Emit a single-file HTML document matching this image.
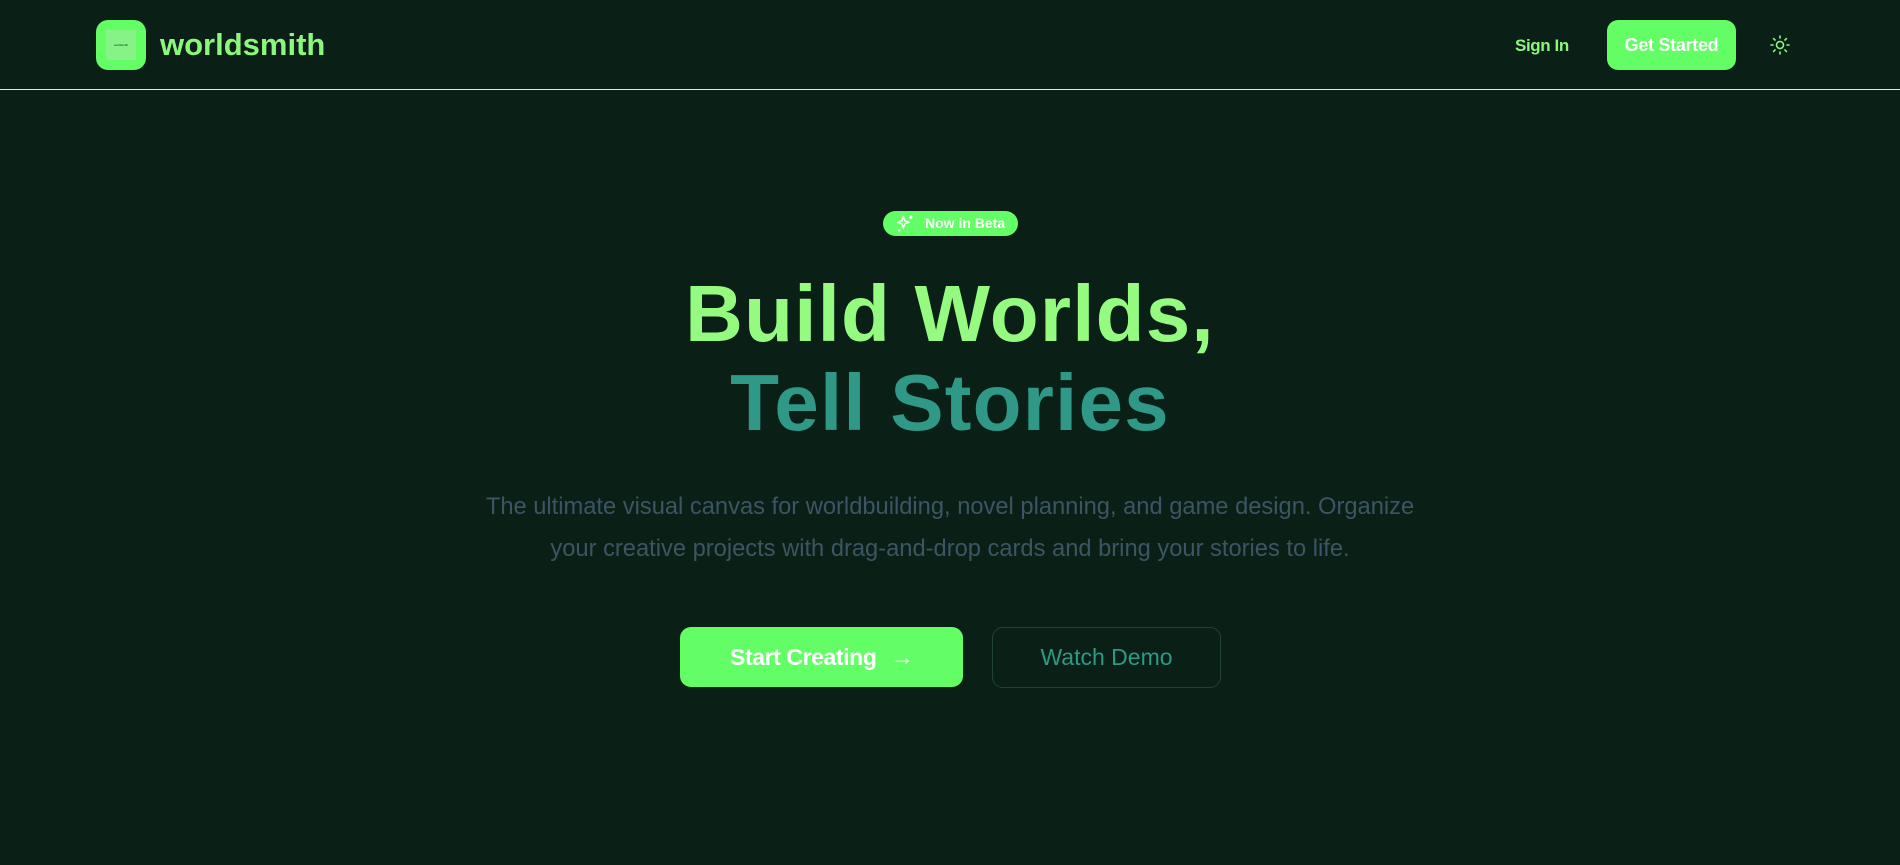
<!DOCTYPE html>
<html><head><meta charset="utf-8"><style>
*{margin:0;padding:0;box-sizing:border-box}
body{width:1900px;height:865px;background:#0a1f15;font-family:"Liberation Sans",sans-serif;overflow:hidden;position:relative}
.hdr{position:absolute;left:0;top:0;width:1900px;height:90px;border-bottom:1.5px solid #dfe8e2}
.logo{position:absolute;left:96px;top:20px;width:50px;height:50px;border-radius:12px;background:#63fd66}
.logo i{position:absolute;left:10px;top:10px;width:30px;height:30px;background:#86f386;font-size:3px;color:#123;font-style:normal;line-height:30px;text-align:center}
.brand{position:absolute;left:160px;top:27px;font-size:31px;font-weight:bold;color:#8cf77d}
.signin{position:absolute;left:1515px;top:36px;font-size:17px;color:#8cf77d;font-weight:bold;letter-spacing:-0.4px}
.gs{position:absolute;left:1607px;top:20px;width:129px;height:50px;border-radius:11px;background:#63fd66;color:#fff;font-size:18px;font-weight:bold;text-align:center;line-height:50px;letter-spacing:-0.3px}
.sun{position:absolute;left:1770px;top:35px}
.badge{position:absolute;left:883px;top:211px;width:135px;height:25px;border-radius:13px;background:#63fd66;color:#fff;font-size:14px;font-weight:bold;line-height:25px;padding-left:42px}
.badge svg{position:absolute;left:12px;top:3px}
h1{position:absolute;left:0;width:1900px;text-align:center;font-size:80px;font-weight:bold;letter-spacing:1.2px;line-height:89px}
.l1{top:269px;color:#94fb80}
.l2{top:358px;color:#2f9886}
p{position:absolute;left:470px;width:960px;top:486px;text-align:center;font-size:23.7px;line-height:42px;color:#3c5564}
.b1{position:absolute;left:680px;top:627px;width:283px;height:60px;border-radius:11px;background:#63fd66;color:#fff;font-size:23px;font-weight:bold;line-height:60px;padding-left:50px;letter-spacing:-0.4px}
.b1 span{position:absolute;left:211px;top:0;font-weight:normal}
.b2{position:absolute;left:992px;top:627px;width:229px;height:61px;border-radius:11px;border:1px solid #1f4434;color:#2f9886;font-size:23px;text-align:center;line-height:59px}
</style></head><body>
<div class="hdr"></div>
<div class="logo"><i>worldsmith</i></div>
<div class="brand">worldsmith</div>
<div class="signin">Sign In</div>
<div class="gs">Get Started</div>
<svg class="sun" width="20" height="20" viewBox="0 0 20 20" stroke="#8cf77d" stroke-width="1.6" fill="none" stroke-linecap="round"><circle cx="10" cy="10" r="3.5"/><path d="M10 1v2M10 17v2M1 10h2M17 10h2M3.6 3.6l1.4 1.4M15 15l1.4 1.4M3.6 16.4L5 15M15 5l1.4-1.4"/></svg>
<div class="badge"><svg width="20" height="20" viewBox="0 0 24 24" fill="none" stroke="#fff" stroke-width="1.8" stroke-linejoin="round"><path d="M10 3l1.8 5.2L17 10l-5.2 1.8L10 17l-1.8-5.2L3 10l5.2-1.8z"/><path d="M19 2v4M17 4h4M5 18v3M3.5 19.5h3"/></svg>Now in Beta</div>
<h1 class="l1">Build Worlds,</h1>
<h1 class="l2">Tell Stories</h1>
<p>The ultimate visual canvas for worldbuilding, novel planning, and game design. Organize your creative projects with drag-and-drop cards and bring your stories to life.</p>
<div class="b1">Start Creating<span>→</span></div>
<div class="b2">Watch Demo</div>
</body></html>
